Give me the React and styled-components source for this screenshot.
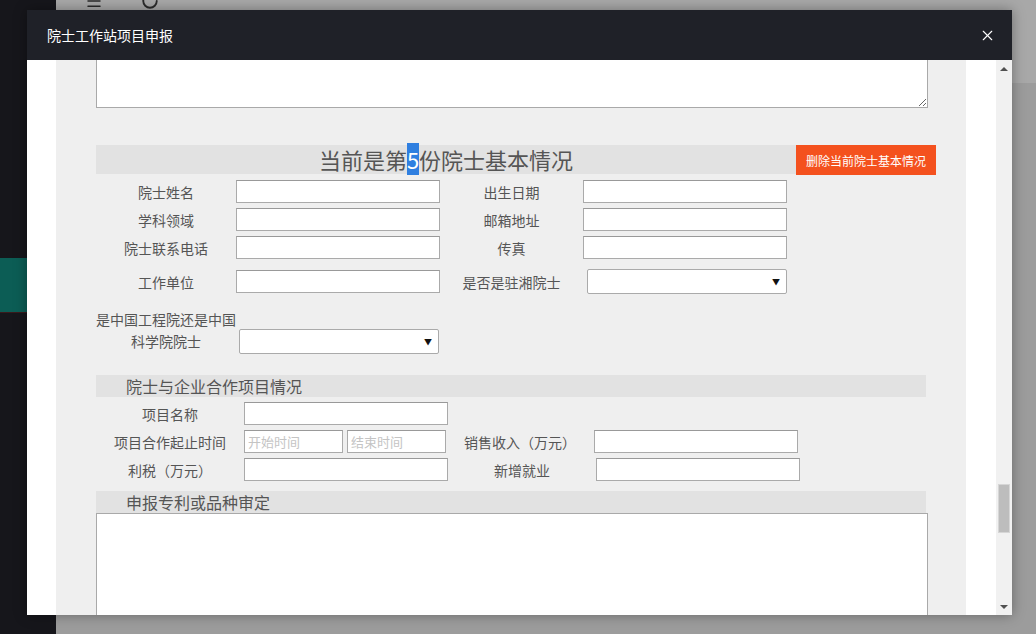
import styled, { createGlobalStyle } from "styled-components";
import { Menu, RotateCw, X } from "lucide-react";

const GlobalStyle = createGlobalStyle`
    html, body {
        margin: 0;
        padding: 0;
        width: 1036px;
        height: 634px;
        overflow: hidden;
        font-family: "Noto Sans CJK SC", "Liberation Sans", sans-serif;
    }
    * { box-sizing: border-box; }
`

const Page = styled.div`
    position: relative;
    display: flex;
    width: 1036px;
    height: 634px;
    background: #9c9c9c;
`
const Sidebar = styled.div`
    width: 56px;
    background: #16161b;
    padding-top: 258px;
`
const SideItem = styled.div`
    height: 55px;
    background: #0c5d55;
    border-bottom: 1px solid #3a1a1c;
`
const Main = styled.div`
    flex: 1;
    display: flex;
    flex-direction: column;
`
const TopBar = styled.div`
    height: 83px;
    background: #a8a8a8;
    display: flex;
    align-items: flex-start;
    gap: 38px;
    padding-left: 29px;
    color: #2b2b2b;
    svg { margin-top: -8px; }
`

const Modal = styled.div`
    position: absolute;
    left: 27px;
    top: 10px;
    width: 985px;
    height: 605px;
    display: flex;
    flex-direction: column;
    background: #fff;
    box-shadow: 0 0 12px rgba(0, 0, 0, 0.35);
`
const ModalHead = styled.div`
    height: 50px;
    flex: none;
    background: #1f2128;
    color: #fff;
    display: flex;
    align-items: center;
    justify-content: space-between;
    padding: 0 16px 0 20px;
    font-size: 14px;
`
const CloseBtn = styled.span`
    display: flex;
    color: #fff;
`
const ModalBody = styled.div`
    flex: 1;
    display: flex;
    overflow: hidden;
`
const Viewport = styled.div`
    flex: 1;
    overflow: hidden;
    padding-left: 29px;
`
const Panel = styled.div`
    display: flow-root;
    width: 910px;
    height: 100%;
    background: #efefef;
    padding-left: 40px;
    color: #555;
`
const TextBox = styled.textarea`
    display: block;
    width: 832px;
    height: ${(p) => p.h}px;
    margin: ${(p) => p.mt || 0}px 0 0;
    border: 1px solid #a9a9a9;
    background: #fff;
    resize: both;
    font-family: inherit;
`
const HeadRow = styled.div`
    display: flex;
    width: 840px;
    height: 30px;
    margin-top: 37px;
`
const BigTitle = styled.div`
    flex: 1;
    height: 29px;
    background: #e2e2e2;
    font-size: 22px;
    line-height: 29px;
    text-align: center;
    color: #555;
`
const Sel = styled.span`
    background: #2f7fe0;
    color: #fff;
`
const DangerBtn = styled.button`
    width: 140px;
    height: 30px;
    border: none;
    background: #f4511e;
    color: #fff;
    font-family: inherit;
    font-size: 12px;
    padding: 0;
`
const Row = styled.div`
    display: flex;
    align-items: center;
    height: 23px;
    margin-top: ${(p) => p.mt}px;
`
const Label = styled.div`
    width: ${(p) => p.w}px;
    flex: none;
    text-align: center;
    font-size: 14px;
    line-height: 22px;
    white-space: nowrap;
`
const Input = styled.input`
    width: ${(p) => p.w || 204}px;
    height: 23px;
    flex: none;
    margin-left: ${(p) => p.ml || 0}px;
    border: 1px solid #aaa;
    border-top-color: #999;
    background: #fff;
    padding: 0 3px;
    font-family: inherit;
    font-size: 13px;
    &::placeholder { color: #c4c4c4; }
`
const Select = styled.div`
    position: relative;
    width: 200px;
    height: 25px;
    flex: none;
    margin-left: ${(p) => p.ml || 0}px;
    margin-bottom: ${(p) => p.mb || 0}px;
    border: 1px solid #aaa;
    border-radius: 2px;
    background: #fff;
    &::after {
        content: "▼";
        position: absolute;
        right: 6px;
        top: 6px;
        font-size: 8px;
        color: #111;
    }
`
const WrapRow = styled.div`
    display: flex;
    align-items: flex-end;
    margin-top: 15px;
`
const WrapLabel = styled.div`
    width: 140px;
    text-align: center;
    font-size: 14px;
    line-height: 22px;
`
const SubBar = styled.div`
    width: 830px;
    height: 22px;
    margin-top: ${(p) => p.mt}px;
    background: #e2e2e2;
    padding-left: 30px;
    font-size: 16px;
    line-height: 22px;
    color: #555;
`
const Scrollbar = styled.div`
    width: 16px;
    flex: none;
    display: flex;
    flex-direction: column;
    align-items: center;
    background: #f1f1f1;
`
const Arrow = styled.div`
    width: 16px;
    height: 17px;
    display: flex;
    align-items: center;
    justify-content: center;
    &::before {
        content: "";
        border-left: 4px solid transparent;
        border-right: 4px solid transparent;
        ${(p) => (p.down ? "border-top: 4px solid #505050;" : "border-bottom: 4px solid #505050;")}
    }
`
const Track = styled.div`
    flex: 1;
    width: 100%;
    display: flex;
    justify-content: center;
`
const Thumb = styled.div`
    width: 12px;
    height: 49px;
    margin-top: 407px;
    background: #bdbdbd;
    border: 1px solid #d6d6d6;
`

const App = () => {
    return (
        <>
            <GlobalStyle />
            <Page>
                <Sidebar>
                    <SideItem />
                </Sidebar>
                <Main>
                    <TopBar>
                        <Menu size={18} />
                        <RotateCw size={18} strokeWidth={2.5} />
                    </TopBar>
                </Main>
                <Modal>
                    <ModalHead>
                        <span>院士工作站项目申报</span>
                        <CloseBtn>
                            <X size={17} strokeWidth={1.6} />
                        </CloseBtn>
                    </ModalHead>
                    <ModalBody>
                        <Viewport>
                            <Panel>
                                <TextBox h={100} mt={-52} />
                                <HeadRow>
                                    <BigTitle>
                                        当前是第<Sel>5</Sel>份院士基本情况
                                    </BigTitle>
                                    <DangerBtn>删除当前院士基本情况</DangerBtn>
                                </HeadRow>
                                <Row mt={5}>
                                    <Label w={140}>院士姓名</Label>
                                    <Input />
                                    <Label w={143}>出生日期</Label>
                                    <Input />
                                </Row>
                                <Row mt={5}>
                                    <Label w={140}>学科领域</Label>
                                    <Input />
                                    <Label w={143}>邮箱地址</Label>
                                    <Input />
                                </Row>
                                <Row mt={5}>
                                    <Label w={140}>院士联系电话</Label>
                                    <Input />
                                    <Label w={143}>传真</Label>
                                    <Input />
                                </Row>
                                <Row mt={11}>
                                    <Label w={140}>工作单位</Label>
                                    <Input />
                                    <Label w={143}>是否是驻湘院士</Label>
                                    <Select ml={4} />
                                </Row>
                                <WrapRow>
                                    <WrapLabel>是中国工程院还是中国科学院院士</WrapLabel>
                                    <Select ml={3} mb={-2} />
                                </WrapRow>
                                <SubBar mt={23}>院士与企业合作项目情况</SubBar>
                                <Row mt={5}>
                                    <Label w={148}>项目名称</Label>
                                    <Input />
                                </Row>
                                <Row mt={5}>
                                    <Label w={148}>项目合作起止时间</Label>
                                    <Input w={99} placeholder="开始时间" />
                                    <Input w={99} ml={4} placeholder="结束时间" />
                                    <Label w={148}>销售收入（万元）</Label>
                                    <Input />
                                </Row>
                                <Row mt={5}>
                                    <Label w={148}>利税（万元）</Label>
                                    <Input />
                                    <Label w={148}>新增就业</Label>
                                    <Input />
                                </Row>
                                <SubBar mt={10}>申报专利或品种审定</SubBar>
                                <TextBox h={200} />
                            </Panel>
                        </Viewport>
                        <Scrollbar>
                            <Arrow />
                            <Track>
                                <Thumb />
                            </Track>
                            <Arrow down />
                        </Scrollbar>
                    </ModalBody>
                </Modal>
            </Page>
        </>
    );
};

export default App;
